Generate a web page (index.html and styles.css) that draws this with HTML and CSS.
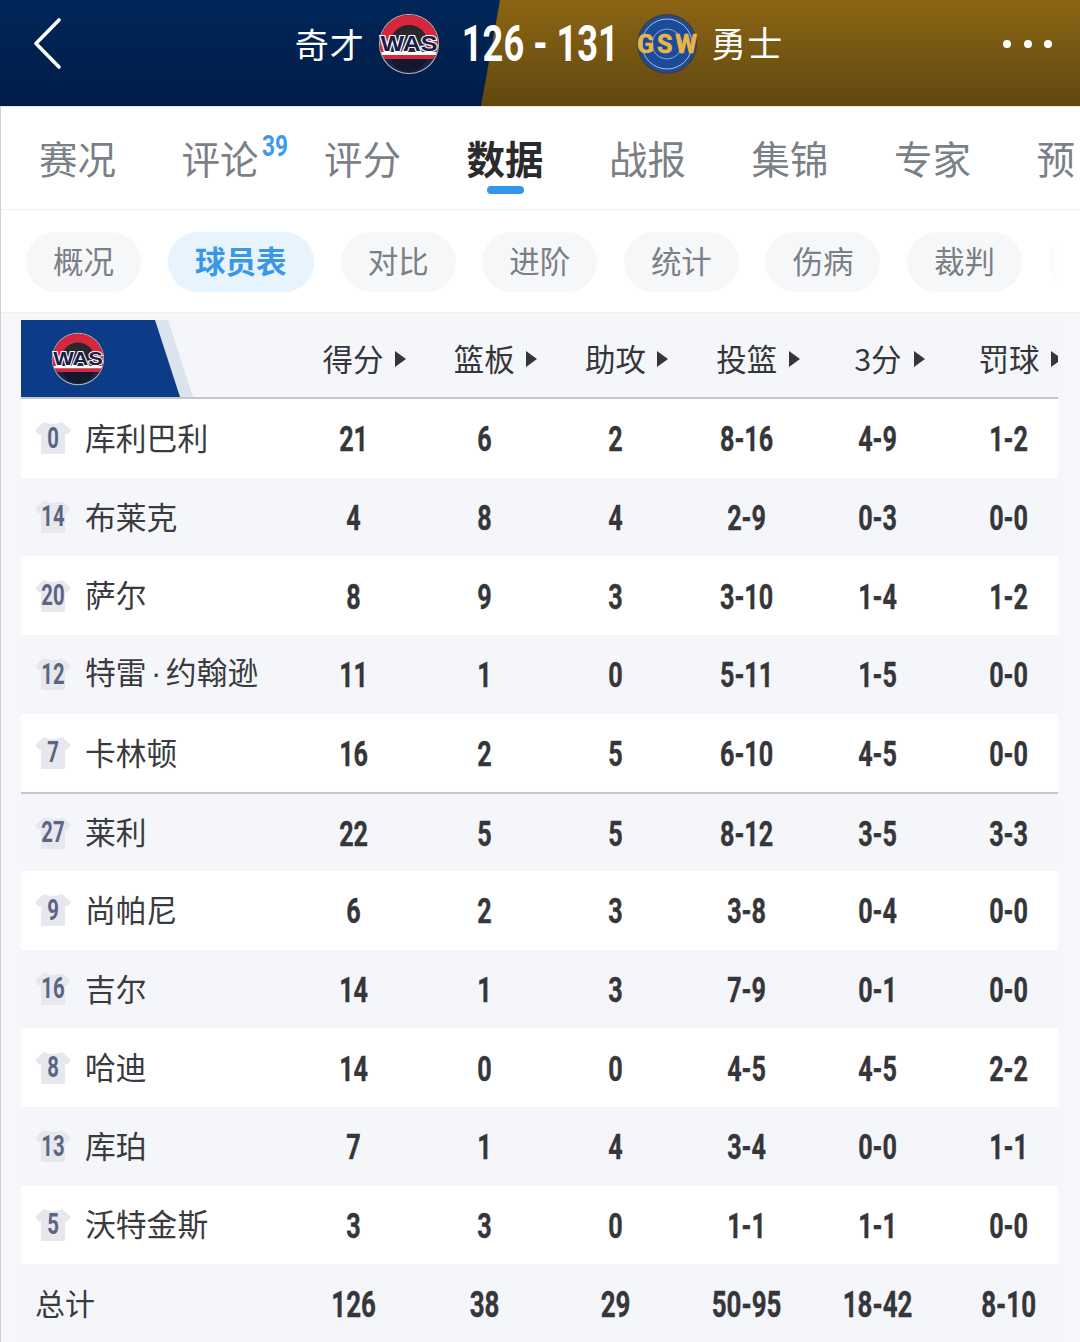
FILE: index.html
```html
<!DOCTYPE html>
<html lang="zh">
<head>
<meta charset="utf-8">
<title>奇才 vs 勇士</title>
<link rel="stylesheet" href="styles.css">
</head>
<body>
<svg class="defs" width="0" height="0" aria-hidden="true">
  <defs>
    <clipPath id="was-clip"><circle cx="31" cy="31" r="29"/></clipPath>
    <symbol id="was" viewBox="0 0 62 62">
      <circle cx="31" cy="31" r="30" fill="#b9b9bd"/>
      <g clip-path="url(#was-clip)">
        <rect width="62" height="62" fill="#1b2345"/>
        <rect width="62" height="41" fill="#d8273d"/>
        <circle cx="31" cy="31" r="19" fill="#2b2629"/>
        <rect y="39" width="62" height="3" fill="#fff"/>
        <rect y="42" width="62" height="4" fill="#d8273d"/>
        <path d="M13 46h36a19 19 0 0 1-36 0z" fill="#14182e"/>
      </g>
      <text x="31" y="38" text-anchor="middle" class="was-text" textLength="57" lengthAdjust="spacingAndGlyphs">WAS</text>
    </symbol>
    <symbol id="jersey" viewBox="0 0 36 34">
      <path d="M9 1 Q18 5 27 1 L35 8 Q36 10 35 11 L31 14 L30 13 L30 32 Q30 33 29 33 L7 33 Q6 33 6 32 L6 13 L5 14 L1 11 Q0 10 1 8 Z" fill="#e6e8ee"/>
    </symbol>
  </defs>
</svg>

<header class="top">
  <div class="top-left">
    <svg class="back" width="30" height="54" viewBox="0 0 30 54"><path d="M26 3 L3 26.5 L26 50" fill="none" stroke="#fff" stroke-width="3.6" stroke-linecap="round" stroke-linejoin="round"/></svg>
  </div>
  <div class="match">
    <span class="team">奇才</span>
    <svg class="logo logo-home" width="62" height="62"><use href="#was"/></svg>
    <span class="score">126 - 131</span>
    <svg class="logo logo-away" width="62" height="62" viewBox="0 0 62 62">
      <circle cx="31" cy="31" r="30" fill="#3f4043"/>
      <circle cx="31" cy="31" r="28.5" fill="#1d4b9b"/>
      <circle cx="31" cy="31" r="25" fill="none" stroke="#b9bdc4" stroke-width="1"/>
      <circle cx="31" cy="31" r="15" fill="none" stroke="#8fa3c6" stroke-width="1"/>
      <text x="31" y="40" text-anchor="middle" class="gsw-text" textLength="60" lengthAdjust="spacing">GSW</text>
    </svg>
    <span class="team team-away">勇士</span>
  </div>
  <div class="dots"><i></i><i></i><i></i></div>
</header>

<main class="page">
  <nav class="tabs">
    <a class="tab">赛况</a>
    <a class="tab">评论<sup class="badge">39</sup></a>
    <a class="tab">评分</a>
    <a class="tab active">数据</a>
    <a class="tab">战报</a>
    <a class="tab">集锦</a>
    <a class="tab">专家</a>
    <a class="tab">预</a>
  </nav>
  <nav class="pills">
    <a class="pill">概况</a>
    <a class="pill active">球员表</a>
    <a class="pill">对比</a>
    <a class="pill">进阶</a>
    <a class="pill">统计</a>
    <a class="pill">伤病</a>
    <a class="pill">裁判</a>
    <a class="pill fade"></a>
  </nav>

  <section class="table">
    <div class="row head">
      <div class="team-cell"><svg width="54" height="54"><use href="#was"/></svg></div>
      <div class="sort">得分</div><div class="sort">篮板</div><div class="sort">助攻</div><div class="sort">投篮</div><div class="sort">3分</div><div class="sort">罚球</div>
    </div>
    <div class="row">
      <div class="player"><span class="shirt"><svg width="36" height="34"><use href="#jersey"/></svg><b>0</b></span>库利巴利</div>
      <div>21</div><div>6</div><div>2</div><div>8-16</div><div>4-9</div><div>1-2</div>
    </div>
    <div class="row">
      <div class="player"><span class="shirt"><svg width="36" height="34"><use href="#jersey"/></svg><b>14</b></span>布莱克</div>
      <div>4</div><div>8</div><div>4</div><div>2-9</div><div>0-3</div><div>0-0</div>
    </div>
    <div class="row">
      <div class="player"><span class="shirt"><svg width="36" height="34"><use href="#jersey"/></svg><b>20</b></span>萨尔</div>
      <div>8</div><div>9</div><div>3</div><div>3-10</div><div>1-4</div><div>1-2</div>
    </div>
    <div class="row">
      <div class="player"><span class="shirt"><svg width="36" height="34"><use href="#jersey"/></svg><b>12</b></span><span>特雷<span class="mid">·</span>约翰逊</span></div>
      <div>11</div><div>1</div><div>0</div><div>5-11</div><div>1-5</div><div>0-0</div>
    </div>
    <div class="row">
      <div class="player"><span class="shirt"><svg width="36" height="34"><use href="#jersey"/></svg><b>7</b></span>卡林顿</div>
      <div>16</div><div>2</div><div>5</div><div>6-10</div><div>4-5</div><div>0-0</div>
    </div>
    <div class="row bench">
      <div class="player"><span class="shirt"><svg width="36" height="34"><use href="#jersey"/></svg><b>27</b></span>莱利</div>
      <div>22</div><div>5</div><div>5</div><div>8-12</div><div>3-5</div><div>3-3</div>
    </div>
    <div class="row">
      <div class="player"><span class="shirt"><svg width="36" height="34"><use href="#jersey"/></svg><b>9</b></span>尚帕尼</div>
      <div>6</div><div>2</div><div>3</div><div>3-8</div><div>0-4</div><div>0-0</div>
    </div>
    <div class="row">
      <div class="player"><span class="shirt"><svg width="36" height="34"><use href="#jersey"/></svg><b>16</b></span>吉尔</div>
      <div>14</div><div>1</div><div>3</div><div>7-9</div><div>0-1</div><div>0-0</div>
    </div>
    <div class="row">
      <div class="player"><span class="shirt"><svg width="36" height="34"><use href="#jersey"/></svg><b>8</b></span>哈迪</div>
      <div>14</div><div>0</div><div>0</div><div>4-5</div><div>4-5</div><div>2-2</div>
    </div>
    <div class="row">
      <div class="player"><span class="shirt"><svg width="36" height="34"><use href="#jersey"/></svg><b>13</b></span>库珀</div>
      <div>7</div><div>1</div><div>4</div><div>3-4</div><div>0-0</div><div>1-1</div>
    </div>
    <div class="row">
      <div class="player"><span class="shirt"><svg width="36" height="34"><use href="#jersey"/></svg><b>5</b></span>沃特金斯</div>
      <div>3</div><div>3</div><div>0</div><div>1-1</div><div>1-1</div><div>0-0</div>
    </div>
    <div class="row total">
      <div class="player">总计</div>
      <div>126</div><div>38</div><div>29</div><div>50-95</div><div>18-42</div><div>8-10</div>
    </div>
  </section>
</main>
</body>
</html>
```
FILE: styles.css
```css
* { box-sizing: border-box; }
html, body { margin: 0; height: 100%; }
body {
  width: 1080px;
  height: 1342px;
  overflow: hidden;
  background: #f6f7fa;
  font-family: "Noto Sans CJK SC", "Noto Sans", sans-serif;
  color: #333;
}
.defs { position: absolute; }
.was-text {
  font-family: "Liberation Sans", sans-serif;
  font-weight: 700;
  font-size: 22px;
  fill: #16204a;
  stroke: #fff;
  stroke-width: 2.2px;
  paint-order: stroke;
}
.gsw-text {
  font-family: "Roboto", sans-serif;
  font-weight: 700;
  font-size: 25px;
  fill: #e9b544;
  stroke: #e9b544;
  stroke-width: .6px;
}

/* top bar */
.top {
  position: relative;
  height: 106px;
  display: grid;
  grid-template-columns: 1fr auto 1fr;
  align-items: center;
  background: linear-gradient(180deg, #012659 0%, #001d47 100%);
  color: #fff;
}
.top::before {
  content: "";
  position: absolute;
  inset: 0;
  background: linear-gradient(180deg, #8b6514 0%, #614810 100%);
  clip-path: polygon(500px 0, 100% 0, 100% 100%, 481px 100%);
}
.top > * { position: relative; }
.top-left { padding-left: 33px; display: flex; }
.back { display: block; margin-top: -18px; }
.match { display: flex; align-items: center; margin-top: -18px; padding-right: 3px; }
.team { font-size: 34px; line-height: 1; width: 68px; letter-spacing: 1px; white-space: nowrap; }
.team-away { font-size: 35px; width: 71px; margin-top: -5px; }
.logo { display: block; }
.logo-home { margin: 0 -8px 0 15px; }
.logo-away { margin: 0 13px 0 -12px; }
.score {
  font-family: "Roboto", sans-serif;
  font-weight: 700;
  font-size: 50px;
  line-height: 1;
  white-space: nowrap;
  transform: scaleX(.725);
}

.dots { justify-self: end; display: flex; gap: 12.5px; padding-right: 28px; margin-top: -18px; }
.dots i { width: 8px; height: 8px; border-radius: 50%; background: #fff; }

/* page */
.page { border-left: 1px solid #cfd0d4; }
.tabs {
  height: 104px;
  padding: 0 0 0 38px;
  display: flex;
  gap: 65.5px;
  align-items: center;
  background: #fff;
  border-top: 1px solid #e6e7ea;
  border-bottom: 1px solid #eeeff1;
  overflow: hidden;
}
.tab {
  position: relative;
  flex: none;
  font-size: 38.5px;
  line-height: 1;
  color: #7b7f86;
  margin-top: -2px;
}
.tab.active { color: #2b2b2e; font-weight: 700; }
.tab.active::after {
  content: "";
  position: absolute;
  left: 20px;
  width: 37px;
  height: 8px;
  top: 48px;
  border-radius: 4px;
  background: #3396ec;
}
.badge {
  position: absolute;
  left: 80.5px;
  top: -5.5px;
  font-family: "Roboto", sans-serif;
  font-weight: 700;
  font-size: 29px;
  line-height: 1;
  color: #3b9be8;
  transform: scaleX(.78);
  transform-origin: left center;
}
.pills {
  height: 103px;
  padding: 22px 0 0 25px;
  display: flex;
  gap: 26.6px;
  background: #fff;
  border-bottom: 1px solid #eeeff1;
  overflow: hidden;
}
.pill {
  flex: none;
  height: 60px;
  padding: 0 27px 3px;
  display: flex;
  align-items: center;
  border-radius: 30px;
  background: #f6f7f9;
  color: #7b7f86;
  font-size: 30.5px;
  line-height: 1;
}
.pill.active { background: #e7f3fd; color: #3b97e6; font-weight: 700; padding: 0 27.5px 3px; }
.pill.fade { width: 115px; background: linear-gradient(90deg, #f6f7f9 0, #fff 8px); }

/* table */
.table { width: 1037px; margin: 7px 0 0 20px; overflow: hidden; }
.row {
  display: grid;
  grid-template-columns: 266.5px repeat(6, 131.2px);
  height: 78.67px;
  align-items: center;
  text-align: center;
  font-family: "Roboto", sans-serif;
  font-weight: 700;
  font-size: 35px;
  color: #35363a;
  background: #fff;
}
.row:nth-child(odd) { background: #f5f6fa; }
.row > div { line-height: 1; }
.row > div:not(.player):not(.sort):not(.team-cell) {
  transform: scaleX(.72);
  margin-top: 3px;
  -webkit-text-stroke: .4px #35363a;
}
.head { height: 79px; border-bottom: 2px solid #c5c7cc; background: #f6f7fa; }
.sort {
  position: relative;
  font-family: "Noto Sans CJK SC", sans-serif;
  font-weight: 400;
  font-size: 30.5px;
  color: #35363a;
}
.sort::after {
  content: "";
  position: absolute;
  top: 50%;
  left: calc(50% + 42px);
  margin-top: -8px;
  border-left: 11px solid #35363a;
  border-top: 8px solid transparent;
  border-bottom: 8px solid transparent;
}
.sort:nth-child(6)::after { left: calc(50% + 36px); }
.team-cell {
  position: relative;
  align-self: stretch;
  display: flex;
  align-items: center;
  padding-left: 30px;
  isolation: isolate;
}
.team-cell::before {
  content: "";
  position: absolute;
  z-index: -1;
  inset: 0;
  width: 172px;
  background: #dbe3ee;
  clip-path: polygon(0 0, 147px 0, 172px 100%, 0 100%);
}
.team-cell::after {
  content: "";
  position: absolute;
  z-index: -1;
  inset: 0;
  width: 159px;
  background: #0c3b87;
  clip-path: polygon(0 0, 134px 0, 159px 100%, 0 100%);
}
.player {
  display: flex;
  align-items: center;
  text-align: left;
  padding: 0 0 2px 14px;
  gap: 14px;
  font-family: "Noto Sans CJK SC", sans-serif;
  font-weight: 400;
  font-size: 30.8px;
  color: #3a3b3f;
  white-space: nowrap;
}
.mid { font-family: "Liberation Sans", sans-serif; margin: 0 4.5px; }
.shirt { position: relative; display: block; width: 36px; height: 34px; flex: none; margin-top: 2px; }
.shirt svg { display: block; }
.shirt b {
  position: absolute;
  inset: 0;
  display: flex;
  align-items: center;
  justify-content: center;
  font-family: "Roboto", sans-serif;
  font-weight: 700;
  font-size: 29px;
  color: #5b6582;
  transform: scaleX(.7);
}
.bench { border-top: 2px solid #c5c7cc; }
.total > div:not(.player) { font-size: 36px; }
.total .player { padding: 0 0 4px 14px; font-size: 30px; }
```
